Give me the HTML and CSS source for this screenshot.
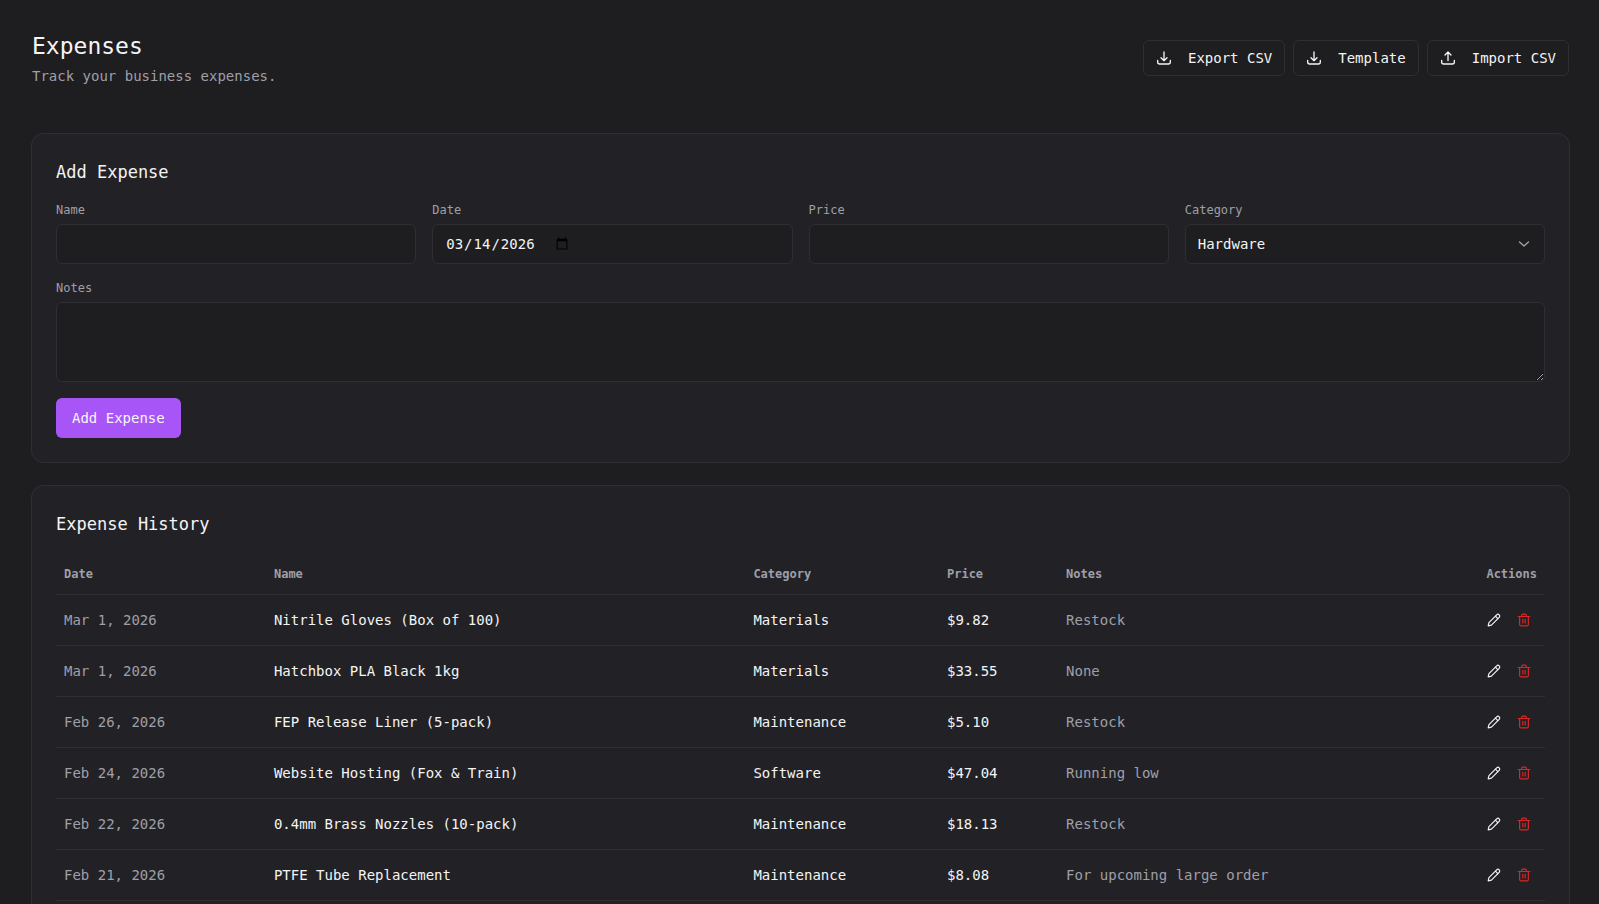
FILE: index.html
```html
<!DOCTYPE html>
<html lang="en">
<head>
    <meta charset="UTF-8">
    <meta name="viewport" content="width=device-width, initial-scale=1.0">
    <title>Expenses</title>
    <link rel="stylesheet" href="styles.css">
</head>
<body>
    <svg class="sprite" aria-hidden="true">
        <symbol id="icon-download" viewBox="0 0 24 24">
            <path d="M2.5 15.5v2.5a3 3 0 0 0 3 3h13a3 3 0 0 0 3-3v-2.5" />
            <path d="M12 3v13M7.5 11.5 12 16l4.5-4.5" />
        </symbol>
        <symbol id="icon-upload" viewBox="0 0 24 24">
            <path d="M2.5 15.5v2.5a3 3 0 0 0 3 3h13a3 3 0 0 0 3-3v-2.5" />
            <path d="M12 16V3M7.5 7.5 12 3l4.5 4.5" />
        </symbol>
        <symbol id="icon-edit" viewBox="0 0 24 24">
            <path d="M2 22l1.3-5.6L16.6 3.1a2.8 2.8 0 0 1 4.3 4.3L7.6 20.7z" />
            <path d="M14.5 5.5l4 4" />
        </symbol>
        <symbol id="icon-trash" viewBox="0 0 24 24">
            <path d="M4.5 6v13.5a2.5 2.5 0 0 0 2.5 2.5h10a2.5 2.5 0 0 0 2.5-2.5V6" />
            <path d="M2 6h20M8 6V4a2 2 0 0 1 2-2h4a2 2 0 0 1 2 2v2" />
            <path d="M10 11v6M14 11v6" />
        </symbol>
    </svg>
    <div class="page">
        <header class="page-header">
            <div>
                <h1>Expenses</h1>
                <p class="subtitle">Track your business expenses.</p>
            </div>
            <div class="header-actions">
                <button type="button" class="btn btn-outline"><svg class="icon"><use href="#icon-download" /></svg>Export CSV</button>
                <button type="button" class="btn btn-outline"><svg class="icon"><use href="#icon-download" /></svg>Template</button>
                <button type="button" class="btn btn-outline"><svg class="icon"><use href="#icon-upload" /></svg>Import CSV</button>
            </div>
        </header>

        <section class="card">
            <h2>Add Expense</h2>
            <form class="expense-form" onsubmit="return false">
                <div class="field">
                    <label for="nameInput">Name</label>
                    <input type="text" id="nameInput">
                </div>
                <div class="field">
                    <label for="dateInput">Date</label>
                    <input type="date" id="dateInput" value="2026-03-14">
                </div>
                <div class="field">
                    <label for="priceInput">Price</label>
                    <input type="number" id="priceInput" step="0.01">
                </div>
                <div class="field">
                    <label for="categoryInput">Category</label>
                    <div class="select-wrap">
                        <select id="categoryInput">
                            <option>Hardware</option>
                            <option>Materials</option>
                            <option>Maintenance</option>
                            <option>Software</option>
                        </select>
                        <svg class="chevron" viewBox="0 0 16 16"><path d="M3.5 6 8 10l4.500-4" /></svg>
                    </div>
                </div>
                <div class="field field-wide">
                    <label for="notesInput">Notes</label>
                    <textarea id="notesInput"></textarea>
                </div>
                <button type="submit" class="btn btn-primary">Add Expense</button>
            </form>
        </section>

        <section class="card">
            <h2>Expense History</h2>
            <table class="history">
                <thead>
                    <tr>
                        <th class="col-date">Date</th>
                        <th class="col-name">Name</th>
                        <th class="col-category">Category</th>
                        <th class="col-price">Price</th>
                        <th>Notes</th>
                        <th class="col-actions">Actions</th>
                    </tr>
                </thead>
                <tbody id="historyRows"></tbody>
            </table>
        </section>
    </div>
    <script src="script.js"></script>
</body>
</html>
```

FILE: styles.css
```css
* {
    box-sizing: border-box;
}

body {
    margin: 0;
    background-color: #1e1e20;
    color: #f4f4f5;
    font-family: "DejaVu Sans Mono", monospace;
    font-size: 14px;
    line-height: 20px;
}

/* scrolls on its own, without a visible scrollbar */
.page {
    height: 100vh;
    overflow-y: auto;
    scrollbar-width: none;
    padding: 30px 30px 0 32px;
}

.sprite {
    display: none;
}

h1, h2, p {
    margin: 0;
    font-weight: normal;
}

h1 {
    font-size: 23px;
    line-height: 32px;
}

h2 {
    margin-bottom: 16px;
    font-size: 17px;
    line-height: 28px;
}

.page-header {
    display: flex;
    justify-content: space-between;
    align-items: center;
    margin-bottom: 48px;
}

.subtitle {
    margin-top: 4px;
    color: #9f9fa9;
}

.header-actions {
    display: flex;
    gap: 8px;
}

.btn {
    display: inline-flex;
    align-items: center;
    gap: 16px;
    border-radius: 6px;
    color: #f4f4f5;
    font: inherit;
    white-space: nowrap;
    cursor: pointer;
}

.btn-outline {
    height: 36px;
    padding: 0 12px;
    border: 1px solid #2f2f33;
    background-color: #1e1e20;
}

.btn-primary {
    justify-self: start;
    height: 40px;
    padding: 0 16px;
    border: none;
    background-color: #a855f7;
}

.btn:hover {
    opacity: 0.9;
}

.icon {
    width: 16px;
    height: 16px;
    fill: none;
    stroke: currentColor;
    stroke-width: 2;
    stroke-linecap: round;
    stroke-linejoin: round;
}

.card {
    margin-bottom: 24px;
    padding: 24px;
    border-radius: 12px;
    background-color: #222226;
    box-shadow: 0 0 0 1px #2f2f33;
}

.expense-form {
    display: grid;
    grid-template-columns: repeat(4, 1fr);
    gap: 16px;
}

.field {
    display: flex;
    flex-direction: column;
    gap: 6px;
}

.field-wide {
    grid-column: 1 / -1;
}

label {
    color: #9f9fa9;
    font-size: 12px;
    line-height: 16px;
}

input, select, textarea {
    width: 100%;
    height: 40px;
    padding: 8px 12px;
    border: 1px solid #2f2f33;
    border-radius: 6px;
    background-color: #1e1e20;
    color: #f4f4f5;
    font: inherit;
}

input[type="date"] {
    display: block;
}

input::-webkit-datetime-edit {
    flex: none;
}

select {
    appearance: none;
}

textarea {
    display: block;
    height: 80px;
    resize: vertical;
}

.select-wrap {
    position: relative;
}

.chevron {
    position: absolute;
    top: 12px;
    right: 13px;
    width: 16px;
    height: 16px;
    fill: none;
    stroke: #9f9fa9;
    stroke-width: 1.4;
    stroke-linecap: round;
    stroke-linejoin: round;
    pointer-events: none;
}

.history {
    width: 100%;
    border-collapse: separate;
    border-spacing: 0;
    table-layout: fixed;
}

.history th, .history td {
    padding: 0 8px;
    border-bottom: 1px solid #2f2f33;
    text-align: left;
    white-space: nowrap;
}

.history th {
    height: 41px;
    color: #9f9fa9;
    font-size: 12px;
}

.history td {
    height: 51px;
}

.history .muted {
    color: #9f9fa9;
}

.col-date {
    width: 14.1%;
}

.col-name {
    width: 32.2%;
}

.col-category {
    width: 13%;
}

.col-price {
    width: 8%;
}

.history .col-actions {
    width: 100px;
    text-align: right;
}

.row-actions {
    display: flex;
    justify-content: flex-end;
    gap: 4px;
}

.icon-btn {
    display: flex;
    padding: 6px;
    border: none;
    background: none;
    color: #f4f4f5;
    cursor: pointer;
}

.icon-btn .icon {
    width: 14px;
    height: 14px;
}

.icon-btn.delete {
    color: #dc2626;
}
```

FILE: script.js
```js
var expenses = [
    ["Mar 1, 2026", "Nitrile Gloves (Box of 100)", "Materials", "$9.82", "Restock"],
    ["Mar 1, 2026", "Hatchbox PLA Black 1kg", "Materials", "$33.55", "None"],
    ["Feb 26, 2026", "FEP Release Liner (5-pack)", "Maintenance", "$5.10", "Restock"],
    ["Feb 24, 2026", "Website Hosting (Fox & Train)", "Software", "$47.04", "Running low"],
    ["Feb 22, 2026", "0.4mm Brass Nozzles (10-pack)", "Maintenance", "$18.13", "Restock"],
    ["Feb 21, 2026", "PTFE Tube Replacement", "Maintenance", "$8.08", "For upcoming large order"]
];

var rows = document.getElementById("historyRows");

expenses.forEach(function(expense) {
    var tr = document.createElement("tr");

    expense.forEach(function(text, i) {
        var td = document.createElement("td");
        td.textContent = text;
        if (i === 0 || i === 4) {
            td.className = "muted";
        }
        tr.appendChild(td);
    });

    var actions = document.createElement("td");
    actions.innerHTML =
        '<div class="row-actions">' +
        '<button type="button" class="icon-btn" aria-label="Edit"><svg class="icon"><use href="#icon-edit" /></svg></button>' +
        '<button type="button" class="icon-btn delete" aria-label="Delete"><svg class="icon"><use href="#icon-trash" /></svg></button>' +
        '</div>';
    tr.appendChild(actions);
    rows.appendChild(tr);
});
```
